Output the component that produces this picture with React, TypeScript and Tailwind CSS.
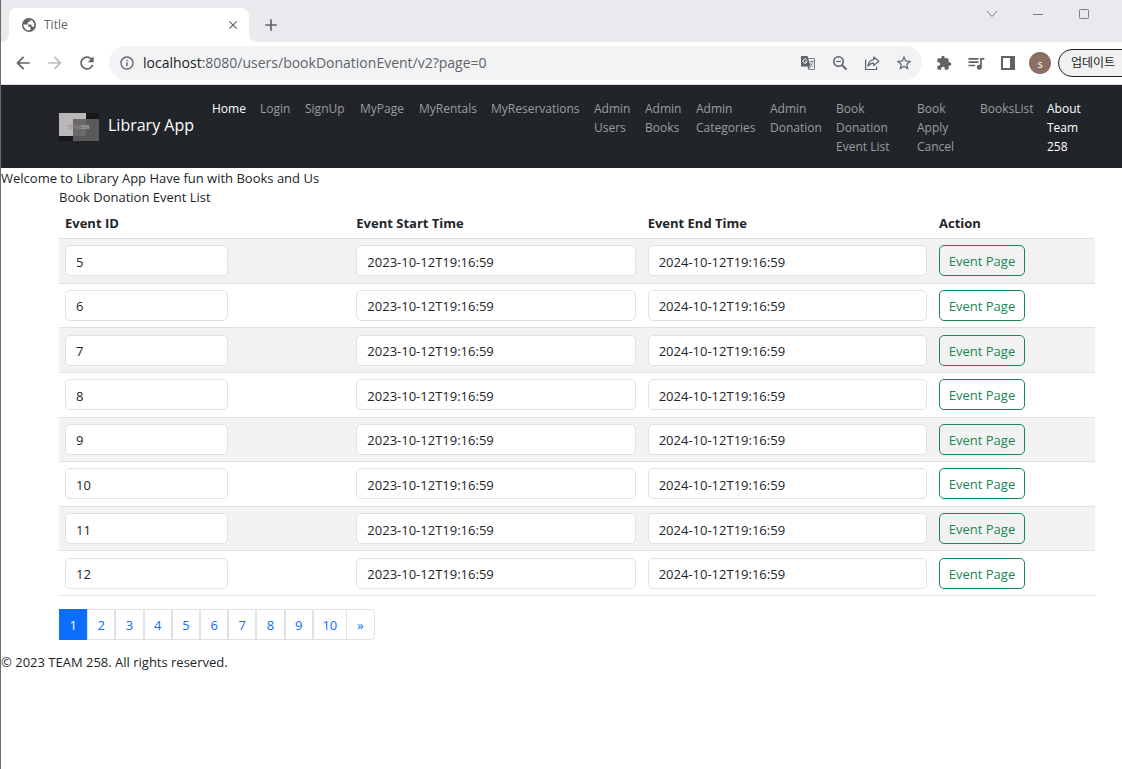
import React from "react";
import {
  MdArrowBack,
  MdArrowForward,
  MdClose,
  MdExtension,
  MdInfoOutline,
  MdQueueMusic,
  MdRefresh,
  MdStarBorder,
  MdAdd,
} from "react-icons/md";

const NAV_LINKS = [
  { label: "Home", width: "w-12", active: true },
  { label: "Login", width: "w-[45px]" },
  { label: "SignUp", width: "w-[55px]" },
  { label: "MyPage", width: "w-[59px]" },
  { label: "MyRentals", width: "w-[72px]" },
  { label: "MyReservations", width: "w-[103px]" },
  { label: "Admin Users", width: "w-[51px]" },
  { label: "Admin Books", width: "w-[51px]" },
  { label: "Admin Categories", width: "w-[74px]" },
  { label: "Admin Donation", width: "w-[66px]" },
  { label: "Book Donation Event List", width: "w-[81px]" },
  { label: "Book Apply Cancel", width: "w-[63px]" },
  { label: "BooksList", width: "w-[67px]" },
  { label: "About Team 258", width: "w-[51px]", active: true },
];

const EVENTS = [5, 6, 7, 8, 9, 10, 11, 12].map((id) => ({
  id,
  start: "2023-10-12T19:16:59",
  end: "2024-10-12T19:16:59",
}));

const PAGES = ["1", "2", "3", "4", "5", "6", "7", "8", "9", "10", "»"];

function IconButton({ label, children }: { label: string; children: React.ReactNode }) {
  return (
    <button aria-label={label} className="flex h-8 w-8 shrink-0 items-center justify-center text-[#5f6368]">
      {children}
    </button>
  );
}

function GlobeIcon() {
  return (
    <svg width="14" height="14" viewBox="0 0 14 14" fill="none">
      <circle cx="7" cy="7" r="7" fill="#5f6368" />
      <path d="M1.5 6.6h3.2c1 0 1.6.7 1.6 1.6v.6h1.3c.5 0 .8.4.8.9v2.4A5.4 5.4 0 0 1 1.5 6.6z" fill="#fff" />
      <path d="M8.6 1.8v.7c0 .7-.5 1.2-1.2 1.2H6.2v1.1c0 .5-.4.8-.8.8v.8h3.2c.6 0 1 .4 1 1v1h.9c.6 0 1.1.4 1.2.9A5.4 5.4 0 0 0 8.6 1.8z" fill="#fff" />
    </svg>
  );
}

function TranslateIcon() {
  return (
    <svg width="16" height="16" viewBox="0 0 16 16" fill="none">
      <path d="M7 3.5h7.5v11H8.5" stroke="#7b7f83" />
      <path d="M1 1h6.5l3.2 10.5H1z" fill="#5f6368" />
      <path d="M7.5 11.5h3.2l-2.4 3z" fill="#5f6368" />
      <path d="M6.8 4.9A2.1 2.1 0 1 0 7.1 6.6H5.2" stroke="#fff" strokeWidth="1" />
      <path d="M9.8 6.5h4M11.8 5.5v1M12.9 6.6c-.4 1.9-1.4 3.2-2.4 4M10.4 8.2c.7 1.5 1.6 2.4 2.8 3.2" stroke="#7b7f83" strokeWidth=".9" />
    </svg>
  );
}

function ZoomOutIcon() {
  return (
    <svg width="16" height="16" viewBox="0 0 16 16" fill="none" stroke="#5f6368">
      <circle cx="6.5" cy="6.5" r="4.7" strokeWidth="1.6" />
      <path d="M10 10l4.5 4.5" strokeWidth="1.8" />
      <path d="M4.2 6.5h4.6" strokeWidth="1.2" />
    </svg>
  );
}

function ShareIcon() {
  return (
    <svg width="16" height="16" viewBox="0 0 16 16" fill="none" stroke="#5f6368" strokeWidth="1.2">
      <path d="M1.6 4.5v10h11v-2.8" />
      <path d="M9.7 2l5 4.3-5 4.3V8.2c-2.5 0-4.3.8-5.8 2.9.4-3.3 2.3-6 5.8-6.5z" strokeLinejoin="round" />
    </svg>
  );
}

function SidePanelIcon() {
  return (
    <svg width="14" height="14" viewBox="0 0 14 14" fill="none">
      <path d="M1 1h12v12H1z" stroke="#5f6368" strokeWidth="2" />
      <path d="M9 1h4v12H9z" fill="#5f6368" />
    </svg>
  );
}

function TeamLogo() {
  return (
    <svg width="40" height="28" viewBox="0 0 40 28" className="shrink-0" role="img" aria-label="Team 258">
      <rect width="40" height="28" fill="#17181a" />
      <rect width="27" height="23" fill="#b9b7b7" />
      <rect x="14" y="6" width="26" height="22" fill="#5b5a5a" />
      <rect x="14" y="6" width="13" height="17" fill="#6b6969" />
      <text x="8" y="16" fontSize="5" fontFamily="Liberation Sans, sans-serif" fill="#98908f">
        TEAM
      </text>
      <text x="22" y="16" fontSize="5" fontWeight="700" fontFamily="Liberation Sans, sans-serif" fill="#b5b0b0">
        258
      </text>
    </svg>
  );
}

function TabStrip() {
  return (
    <div className="flex h-[42px] items-end bg-[#e8eaed]">
      <svg width="8" height="8" viewBox="0 0 8 8">
        <path d="M8 0a8 8 0 0 1-8 8h8z" fill="#fff" />
      </svg>
      <div className="flex h-[34px] w-60 items-center rounded-t-lg bg-white pr-2 pl-[13px] text-[#5f6368]">
        <GlobeIcon />
        <span className="ml-2 flex-1 text-xs">Title</span>
        <button aria-label="Close tab" className="flex h-4 w-4 items-center justify-center">
          <MdClose size={14} />
        </button>
      </div>
      <svg width="8" height="8" viewBox="0 0 8 8">
        <path d="M0 0a8 8 0 0 0 8 8H0z" fill="#fff" />
      </svg>
      <button aria-label="New tab" className="flex h-[34px] w-7 items-center justify-center text-[#5f6368]">
        <MdAdd size={20} />
      </button>
      <div className="ml-auto flex h-full items-start pr-[15px] text-[#7b7d80]">
        <button aria-label="Search tabs" className="flex h-7 w-[46px] items-center justify-center">
          <svg width="12" height="12" viewBox="0 0 12 12" fill="none" stroke="currentColor">
            <path d="M1 3l5 5.5L11 3" />
          </svg>
        </button>
        <button aria-label="Minimize" className="flex h-7 w-[46px] items-center justify-center">
          <svg width="10" height="10" viewBox="0 0 10 10" fill="none" stroke="currentColor">
            <path d="M0 5.5h10" />
          </svg>
        </button>
        <button aria-label="Maximize" className="flex h-7 w-[46px] items-center justify-center">
          <svg width="10" height="10" viewBox="0 0 10 10" fill="none" stroke="currentColor">
            <rect x=".5" y=".5" width="9" height="9" rx="1" />
          </svg>
        </button>
      </div>
    </div>
  );
}

function Toolbar() {
  return (
    <div className="flex h-[43px] items-center border-b border-[#dadce0] bg-white pl-1.5">
      <IconButton label="Back">
        <MdArrowBack size={20} />
      </IconButton>
      <button aria-label="Forward" disabled className="flex h-8 w-8 items-center justify-center text-[#babcbe]">
        <MdArrowForward size={20} />
      </button>
      <IconButton label="Reload">
        <MdRefresh size={20} />
      </IconButton>
      <div className="ml-1.5 flex h-[34px] flex-1 items-center rounded-full bg-[#f1f3f4] pr-0.5 pl-2.5">
        <MdInfoOutline size={16} className="text-[#5f6368]" />
        <div className="ml-2 flex-1 text-sm text-[#5f6368]">
          <span className="text-[#202124]">localhost</span>:8080/users/bookDonationEvent/v2?page=0
        </div>
        <IconButton label="Translate this page">
          <TranslateIcon />
        </IconButton>
        <IconButton label="Zoom">
          <ZoomOutIcon />
        </IconButton>
        <IconButton label="Share this page">
          <ShareIcon />
        </IconButton>
        <IconButton label="Bookmark this tab">
          <MdStarBorder size={18} />
        </IconButton>
      </div>
      <div className="flex w-[200px] shrink-0 items-center overflow-hidden pl-1.5">
        <IconButton label="Extensions">
          <MdExtension size={16} />
        </IconButton>
        <IconButton label="Media controls">
          <MdQueueMusic size={20} />
        </IconButton>
        <IconButton label="Side panel">
          <SidePanelIcon />
        </IconButton>
        <IconButton label="Profile">
          <span className="flex h-[22px] w-[22px] items-center justify-center rounded-full bg-[#8d6e63] text-[11px] text-white">
            s
          </span>
        </IconButton>
        <button className="ml-0.5 h-7 w-24 shrink-0 rounded-full border border-[#202124] bg-[#f1f1f1] pl-3 text-left text-xs text-[#202124]">
          업데이트
        </button>
      </div>
    </div>
  );
}

function Navbar() {
  return (
    <nav className="flex items-start bg-[#212529] py-[7px] pl-[58px]">
      <a href="#" className="flex h-[69px] shrink-0 items-center gap-[9px] text-base leading-5 text-white">
        <TeamLogo />
        <span className="w-[98px] pb-1 whitespace-nowrap">Library App</span>
      </a>
      <ul className="flex text-xs leading-[19px]">
        {NAV_LINKS.map(({ label, width, active }) => (
          <li key={label} className={`shrink-0 ${width}`}>
            <a
              href="#"
              className={`block pt-[7px] pl-1.5 ${active ? "text-white" : "text-[#9b9d9e]"}`}
            >
              {label}
            </a>
          </li>
        ))}
      </ul>
    </nav>
  );
}

function EventTable() {
  const field = "block h-[31px] rounded-[5px] border border-[#dee2e6] bg-white px-2.5 pt-0.5 text-[#212529]";
  const head = "border-b border-[#dee2e6] px-1.5 pt-[7px] pb-[5px] text-left";
  const cell = "border-b border-[#dee2e6] p-1.5";

  return (
    <table className="h-[389px] w-full table-fixed border-separate border-spacing-0">
      <thead>
        <tr>
          <th className={head}>Event ID</th>
          <th className={head}>Event Start Time</th>
          <th className={head}>Event End Time</th>
          <th className={`w-[162px] ${head}`}>Action</th>
        </tr>
      </thead>
      <tbody>
        {EVENTS.map((event) => (
          <tr key={event.id} className="odd:bg-[#f2f2f2]">
            <td className={cell}>
              <input aria-label="Event ID" readOnly value={event.id} className={`w-[163px] ${field}`} />
            </td>
            <td className={cell}>
              <input aria-label="Event Start Time" readOnly value={event.start} className={`w-full ${field}`} />
            </td>
            <td className={cell}>
              <input aria-label="Event End Time" readOnly value={event.end} className={`w-full ${field}`} />
            </td>
            <td className={cell}>
              <button className="block h-[31px] w-[86px] rounded-[5px] border border-[#198754] pt-0.5 whitespace-nowrap text-[#198754]">
                Event Page
              </button>
            </td>
          </tr>
        ))}
      </tbody>
    </table>
  );
}

function Pagination() {
  return (
    <ul className="my-[13px] flex w-[316px]">
      {PAGES.map((page) => (
        <li key={page} className={page === "10" ? "w-[34px]" : "flex-1"}>
          <a
            href="#"
            className={`flex h-[31px] items-center justify-center border pt-0.5 ${
              page === "1"
                ? "border-[#0d6efd] bg-[#0d6efd] text-white"
                : "border-[#dee2e6] text-[#0d6efd]"
            } ${page === "»" ? "rounded-r-[5px] border-l-0" : ""}`}
          >
            {page}
          </a>
        </li>
      ))}
    </ul>
  );
}

export default function App() {
  return (
    <div className="min-h-screen overflow-x-hidden border-l border-[#6b6b6b] bg-white font-['Open_Sans','Noto_Sans_CJK_KR',sans-serif] text-[13px] leading-[19px] text-[#212529]">
      <TabStrip />
      <Toolbar />
      <Navbar />
      <p className="pt-px">Welcome to Library App Have fun with Books and Us</p>
      <main className="pr-[27px] pl-[58px]">
        <h1>Book Donation Event List</h1>
        <EventTable />
        <Pagination />
      </main>
      <footer>© 2023 TEAM 258. All rights reserved.</footer>
    </div>
  );
}
